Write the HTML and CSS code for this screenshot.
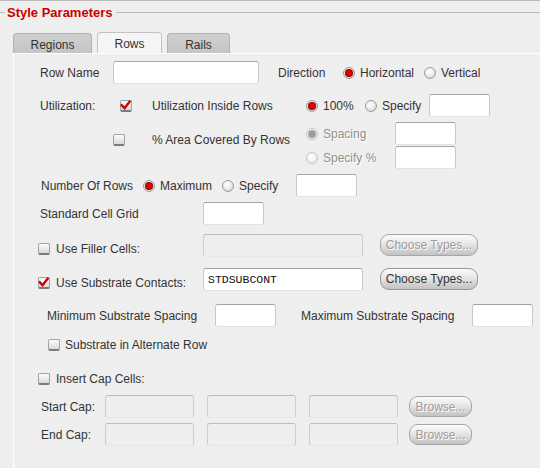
FILE: index.html
```html
<!DOCTYPE html>
<html>
<head>
<meta charset="utf-8">
<title>Style Parameters</title>
<link rel="stylesheet" href="styles.css">
</head>
<body>
<div class="window">
  <div class="legend"><span class="legend-title">Style Parameters</span></div>
  <div class="tabs">
    <div class="tab tab-regions">Regions</div>
    <div class="tab tab-rows active">Rows</div>
    <div class="tab tab-rails">Rails</div>
  </div>
  <div class="panel">
    <div class="row r1">
      <span class="lbl lbl-rowname">Row Name</span>
      <span class="field w-name"></span>
      <span class="lbl lbl-direction">Direction</span>
      <span class="opt"><span class="rd on"></span>Horizontal</span>
      <span class="opt opt-next"><span class="rd"></span>Vertical</span>
    </div>

    <div class="row r2">
      <span class="lbl lbl-util">Utilization:</span>
      <span class="cb on"><svg viewBox="0 0 12 12" width="12" height="12"><path d="M1.8 5.2 L4.6 8.2 L9.6 1.8" fill="none" stroke="#cc0000" stroke-width="2.4" stroke-linecap="square"/></svg></span>
      <span class="lbl lbl-inside">Utilization Inside Rows</span>
      <span class="opt opt-100"><span class="rd on"></span>100%</span>
      <span class="opt opt-specify"><span class="rd"></span>Specify</span>
      <span class="field w-small"></span>
    </div>

    <div class="row r3">
      <div class="area">
        <span class="cb"></span>
        <span class="lbl lbl-area">% Area Covered By Rows</span>
      </div>
      <div class="stack">
        <div class="sub">
          <span class="opt opt-spacing disabled"><span class="rd on dis"></span>Spacing</span>
          <span class="field w-small"></span>
        </div>
        <div class="sub">
          <span class="opt opt-spacing disabled"><span class="rd dis"></span>Specify %</span>
          <span class="field w-small"></span>
        </div>
      </div>
    </div>

    <div class="row r4">
      <span class="lbl lbl-nrows">Number Of Rows</span>
      <span class="opt opt-max"><span class="rd on"></span>Maximum</span>
      <span class="opt opt-nspec"><span class="rd"></span>Specify</span>
      <span class="field w-small"></span>
    </div>

    <div class="row r5">
      <span class="lbl lbl-grid">Standard Cell Grid</span>
      <span class="field w-small"></span>
    </div>

    <div class="row r6">
      <span class="chk chk-wide"><span class="cb"></span><span class="chk-text">Use Filler Cells:</span></span>
      <span class="field w-long disabled"></span>
      <span class="btn btn-choose disabled">Choose Types...</span>
    </div>

    <div class="row r7">
      <span class="chk chk-wide"><span class="cb on"><svg viewBox="0 0 12 12" width="12" height="12"><path d="M1.8 5.2 L4.6 8.2 L9.6 1.8" fill="none" stroke="#cc0000" stroke-width="2.4" stroke-linecap="square"/></svg></span><span class="chk-text">Use Substrate Contacts:</span></span>
      <span class="field w-long mono">STDSUBCONT</span>
      <span class="btn btn-choose">Choose Types...</span>
    </div>

    <div class="row r8">
      <span class="lbl lbl-minsub">Minimum Substrate Spacing</span>
      <span class="field w-small"></span>
      <span class="lbl lbl-maxsub">Maximum Substrate Spacing</span>
      <span class="field w-small"></span>
    </div>

    <div class="row r9">
      <span class="chk chk-alt"><span class="cb"></span><span class="chk-text tight">Substrate in Alternate Row</span></span>
    </div>

    <div class="row r10">
      <span class="chk"><span class="cb"></span><span class="chk-text">Insert Cap Cells:</span></span>
    </div>

    <div class="row r11">
      <span class="lbl lbl-cap">Start Cap:</span>
      <span class="field w-cap disabled"></span>
      <span class="field w-cap disabled cap-next"></span>
      <span class="field w-cap disabled cap-next"></span>
      <span class="btn btn-browse disabled">Browse...</span>
    </div>

    <div class="row r12">
      <span class="lbl lbl-cap">End Cap:</span>
      <span class="field w-cap disabled"></span>
      <span class="field w-cap disabled cap-next"></span>
      <span class="field w-cap disabled cap-next"></span>
      <span class="btn btn-browse disabled">Browse...</span>
    </div>
  </div>
</div>
</body>
</html>
```

FILE: styles.css
```css
* { box-sizing: border-box; }
html, body { margin: 0; padding: 0; }
body {
  width: 540px;
  height: 468px;
  overflow: hidden;
  font-family: "Liberation Sans", Arial, sans-serif;
  font-size: 12px;
  color: #333;
  background-color: #efefef;
  background-image: repeating-conic-gradient(#f1f1f1 0 25%, #ececec 0 50%);
  background-size: 2px 2px;
}
.window {
  height: 468px;
  border-top: 1px solid #b9b9b9;
  display: flex;
  flex-direction: column;
}
.legend {
  display: flex;
  align-items: center;
  height: 23px;
  flex: none;
}
.legend::before {
  content: "";
  width: 5px;
  border-top: 1px solid #b9b9b9;
}
.legend::after {
  content: "";
  flex: 1;
  border-top: 1px solid #b9b9b9;
}
.legend-title {
  padding: 0 3px 0 2px;
  font-size: 13px;
  font-weight: bold;
  color: #cc0000;
}
.tabs {
  display: flex;
  align-items: flex-end;
  gap: 5px;
  height: 29px;
  padding-left: 13px;
  flex: none;
}
.tab {
  height: 20px;
  border: 1px solid #b2b2b2;
  border-bottom: none;
  border-radius: 4px 4px 0 0;
  background: linear-gradient(#d0d0d0, #c5c5c5);
  display: flex;
  align-items: center;
  justify-content: center;
  padding-top: 2px;
  color: #333;
}
.tab-regions { width: 79px; }
.tab-rows { width: 65px; height: 21px; background: #f5f5f5; border-color: #c4c4c4; }
.tab-rails { width: 63px; }

.panel {
  flex: 1;
  margin-left: 13px;
  border-top: 1px solid #fff;
  border-left: 1px solid #fff;
  padding-left: 24px;
  display: flex;
  flex-direction: column;
}
.row {
  display: flex;
  align-items: center;
  height: 23px;
  flex: none;
}
.lbl { white-space: nowrap; flex: none; }

/* vertical rhythm */
.r1 { margin-top: 7px; }
.r2 { margin-top: 10px; }
.r3 { margin-top: 5px; height: 47px; align-items: flex-start; }
.r4 { margin-top: 5px; }
.r5 { margin-top: 5px; }
.r6 { margin-top: 9px; }
.r7 { margin-top: 11px; }
.r8 { margin-top: 13px; }
.r9 { margin-top: 6px; }
.r10 { margin-top: 11px; }
.r11 { margin-top: 5px; }
.r12 { margin-top: 5px; }

/* fields */
.field {
  flex: none;
  height: 23px;
  background: #fff;
  border: 1px solid #c8c8c8;
  border-top-color: #a4a4a4;
  border-bottom-color: #e2e2e2;
  border-radius: 3px;
  display: flex;
  align-items: center;
}
.field.disabled {
  background: transparent;
  border-color: #cdcdcd;
  border-top-color: #bcbcbc;
  border-bottom-color: #e6e6e6;
}
.w-name { width: 146px; }
.w-small { width: 61px; }
.w-long { width: 160px; }
.w-cap { width: 89px; }
.mono {
  font-family: "Liberation Mono", "Courier New", monospace;
  font-size: 11.5px;
  color: #111;
  padding-left: 4px;
}

/* radio options */
.opt {
  display: flex;
  align-items: center;
  gap: 5px;
  flex: none;
  white-space: nowrap;
}
.opt-next { margin-left: 10px; }
.opt.disabled { color: #8f8f8f; text-shadow: 1px 1px 0 #fff; }
.rd {
  width: 12px;
  height: 12px;
  flex: none;
  border-radius: 50%;
  border: 1px solid #9c9c9c;
  background: radial-gradient(circle at 40% 35%, #ffffff 0%, #f0f0f0 40%, #c9c9c9 100%);
  display: flex;
  align-items: center;
  justify-content: center;
}
.rd.on::after {
  content: "";
  width: 6px;
  height: 6px;
  border-radius: 50%;
  background: #e60000;
  box-shadow: 0 0 0 1px #8a0000;
}
.rd.dis { border-color: #c4c4c4; background: radial-gradient(circle at 40% 35%, #ffffff 0%, #f2f2f2 50%, #dcdcdc 100%); }
.rd.on.dis::after { background: #9a9a9a; box-shadow: 0 0 0 1px #a8a8a8; }

/* checkboxes */
.cb {
  width: 12px;
  height: 12px;
  flex: none;
  border: 1px solid #a2a2a2;
  border-bottom: 2px solid #7a7a7a;
  border-radius: 2px;
  background: linear-gradient(#fcfcfc, #d9d9d9);
  display: flex;
  align-items: center;
  justify-content: center;
  overflow: visible;
}
.cb svg { flex: none; margin-top: 1px; }

.chk {
  display: flex;
  align-items: center;
  margin-top: 7px;
  flex: none;
  white-space: nowrap;
}
.chk-text { margin-left: 6px; }
.chk-text.tight { margin-left: 5px; }
.chk-wide { width: 165px; }
.chk-alt { margin-left: 10px; margin-top: 0; }
.r10 .chk { margin-top: 0; }

/* row specifics */
.lbl-rowname { margin-left: 2px; width: 73px; }
.lbl-direction { margin-left: 19px; width: 65px; }

.lbl-util { margin-left: 2px; width: 80px; }
.lbl-inside { margin-left: 20px; width: 154px; }
.opt-100 { width: 59px; }
.opt-specify { width: 64px; }

.area {
  display: flex;
  align-items: center;
  height: 14px;
  margin-top: 11px;
  margin-left: 75px;
}
.lbl-area { margin-left: 27px; width: 154px; }
.stack { display: flex; flex-direction: column; gap: 1px; }
.sub { display: flex; align-items: center; height: 23px; }
.opt-spacing { width: 89px; }

.lbl-nrows { margin-left: 3px; width: 102px; }
.opt-max { width: 79px; }
.opt-nspec { width: 74px; }

.lbl-grid { margin-left: 2px; width: 163px; }

.lbl-minsub { margin-left: 9px; width: 168px; }
.lbl-maxsub { margin-left: 25px; width: 171px; }

.lbl-cap { margin-left: 3px; width: 64px; }
.cap-next { margin-left: 13px; }

/* buttons */
.btn {
  flex: none;
  display: flex;
  align-items: center;
  justify-content: center;
  border: 1px solid #989898;
  border-radius: 9px;
  background: linear-gradient(#fbfbfb 0%, #e9e9e9 40%, #c2c2c2 100%);
  color: #333;
  white-space: nowrap;
}
.btn.disabled { color: #9c9c9c; text-shadow: 1px 1px 0 #fff; border-color: #a6a6a6; }
.btn-choose {
  width: 98px;
  height: 22px;
  margin-left: 17px;
  align-self: flex-start;
}
.btn-browse {
  width: 63px;
  height: 21px;
  margin-left: 11px;
}
```
